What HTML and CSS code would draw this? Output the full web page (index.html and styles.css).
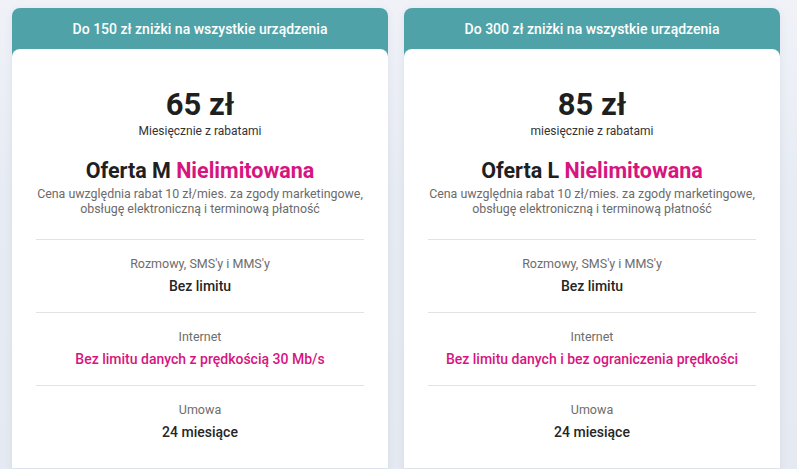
FILE: index.html
```html
<!DOCTYPE html>
<html lang="pl">

<head>
    <meta charset="UTF-8">
    <meta name="viewport" content="width=device-width, initial-scale=1.0">
    <title>Oferty</title>
    <link rel="stylesheet" href="styles.css">
</head>

<body>
    <div class="offers">

        <div class="offer">
            <div class="offer-head">Do 150 zł zniżki na wszystkie urządzenia</div>
            <div class="offer-body">
                <div class="price">65 zł</div>
                <div class="price-note">Miesięcznie z rabatami</div>
                <h2 class="offer-name">Oferta M <span class="pink">Nielimitowana</span></h2>
                <p class="offer-desc">Cena uwzględnia rabat 10 zł/mies. za zgody marketingowe,<br>obsługę elektroniczną i terminową płatność</p>

                <div class="feature">
                    <div class="feature-label">Rozmowy, SMS'y i MMS'y</div>
                    <div class="feature-value">Bez limitu</div>
                </div>
                <div class="feature">
                    <div class="feature-label">Internet</div>
                    <div class="feature-value pink">Bez limitu danych z prędkością 30 Mb/s</div>
                </div>
                <div class="feature">
                    <div class="feature-label">Umowa</div>
                    <div class="feature-value">24 miesiące</div>
                </div>
            </div>
        </div>

        <div class="offer">
            <div class="offer-head">Do 300 zł zniżki na wszystkie urządzenia</div>
            <div class="offer-body">
                <div class="price">85 zł</div>
                <div class="price-note">miesięcznie z rabatami</div>
                <h2 class="offer-name">Oferta L <span class="pink">Nielimitowana</span></h2>
                <p class="offer-desc">Cena uwzględnia rabat 10 zł/mies. za zgody marketingowe,<br>obsługę elektroniczną i terminową płatność</p>

                <div class="feature">
                    <div class="feature-label">Rozmowy, SMS'y i MMS'y</div>
                    <div class="feature-value">Bez limitu</div>
                </div>
                <div class="feature">
                    <div class="feature-label">Internet</div>
                    <div class="feature-value pink">Bez limitu danych i bez ograniczenia prędkości</div>
                </div>
                <div class="feature">
                    <div class="feature-label">Umowa</div>
                    <div class="feature-value">24 miesiące</div>
                </div>
            </div>
        </div>

    </div>
</body>

</html>
```

FILE: styles.css
```css
* {
    box-sizing: border-box;
}

body {
    margin: 0;
    padding: 0;
    font-family: Roboto, "Noto Sans", sans-serif;
    color: #262626;
    background: linear-gradient(180deg, #f0f2f8 0%, #e7ebf3 40%, #e5e9f1 100%);
    height: 469px;
    overflow: hidden;
}

.offers {
    display: flex;
    gap: 16px;
    padding: 8px 0 0 12px;
}

/* one offer card */
.offer {
    width: 376px;
    background-color: #4fa3a8;
    border-radius: 8px 8px 0 0;
    box-shadow: 0 2px 8px rgba(60, 80, 110, 0.08);
}

.offer-head {
    height: 41px;
    display: flex;
    align-items: center;
    justify-content: center;
    color: #fff;
    font-size: 14px;
    font-weight: 500;
}

.offer-body {
    background-color: #fff;
    border-radius: 8px 8px 0 0;
    padding: 38px 24px 10px;
    text-align: center;
}

.price {
    font-size: 31px;
    line-height: 36px;
    font-weight: 700;
    color: #1f1f1f;
}

.price-note {
    font-size: 12px;
    line-height: 16px;
    color: #333;
}

.offer-name {
    margin: 19px 0 2px;
    font-size: 21.5px;
    line-height: 26px;
    font-weight: 700;
    color: #1f1f1f;
}

.pink {
    color: #d6157f;
}

.offer-desc {
    margin: 0 0 23px;
    font-size: 12.4px;
    line-height: 15px;
    color: #6b6b6b;
    white-space: nowrap;
}

.feature {
    border-top: 1px solid #e3e3e3;
    padding: 16px 0;
}

.feature-label {
    font-size: 12.5px;
    line-height: 16px;
    color: #6d6d6d;
}

.feature-value {
    margin-top: 4px;
    font-size: 14px;
    line-height: 20px;
    font-weight: 500;
    color: #262626;
}

.feature-value.pink {
    color: #d6157f;
}
```
